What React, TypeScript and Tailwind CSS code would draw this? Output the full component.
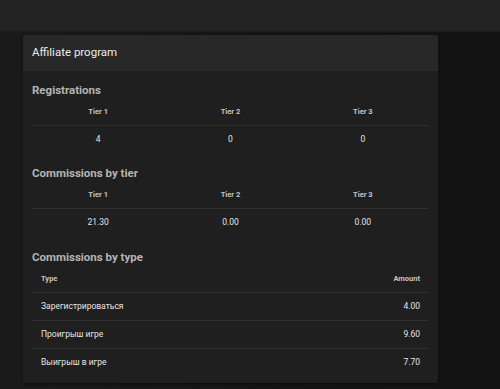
import React from "react";

const tiers = ["Tier 1", "Tier 2", "Tier 3"];

function TierTable({ values }: { values: string[] }) {
  return (
    <table className="w-full border-collapse table-fixed">
      <thead>
        <tr className="h-[27px]">
          {tiers.map((t) => (
            <th key={t} className="text-[7.5px] font-bold text-[#c4c4c4] text-center align-middle p-0">
              {t}
            </th>
          ))}
        </tr>
      </thead>
      <tbody>
        <tr className="h-[28px] border-t border-[#2f2f2f]">
          {values.map((v, i) => (
            <td key={i} className="text-[8.5px] text-[#e4e4e4] text-center align-middle p-0">
              {v}
            </td>
          ))}
        </tr>
      </tbody>
    </table>
  );
}

const types = [
  ["Зарегистрироваться", "4.00"],
  ["Проигрыш игре", "9.60"],
  ["Выигрыш в игре", "7.70"],
];

export default function App() {
  return (
    <div
      className="w-[500px] h-[389px] overflow-hidden bg-[#151515] flex flex-col"
      style={{ fontFamily: "Roboto, 'Noto Sans', sans-serif" }}
    >
      <div className="h-[32px] shrink-0 bg-[#232323] border-b border-[#1b1b1b]" />
      <div className="flex-1 bg-gradient-to-r from-[#1a1a1a] via-[#151515] to-[#131313] pl-[23px] pt-[3px]">
        <div className="w-[415px] bg-[#1f1f1f] rounded-[2px] shadow-[0_1px_3px_rgba(0,0,0,0.5)]">
          <div className="h-[37px] bg-[#282828] px-[9px] flex items-center text-[11.5px] text-[#ececec] rounded-t-[2px] border-b border-[#1c1c1c]">
            Affiliate program
          </div>
          <div className="px-[9px] pt-[10px] pb-[7px]">
            <div className="h-4 leading-4 text-[11.5px] font-bold text-[#b4b4b4]">Registrations</div>
            <TierTable values={["4", "0", "0"]} />
            <div className="mt-[12px] h-4 leading-4 text-[11.5px] font-bold text-[#b4b4b4]">Commissions by tier</div>
            <TierTable values={["21.30", "0.00", "0.00"]} />
            <div className="mt-[13px] h-4 leading-4 text-[11.5px] font-bold text-[#b4b4b4]">Commissions by type</div>
            <table className="w-full border-collapse">
              <thead>
                <tr className="h-[27px]">
                  <th className="text-[7.5px] font-bold text-[#c4c4c4] text-left align-middle py-0 px-[9px]">Type</th>
                  <th className="text-[7.5px] font-bold text-[#c4c4c4] text-right align-middle py-0 px-[9px]">Amount</th>
                </tr>
              </thead>
              <tbody>
                {types.map(([t, a], i) => (
                  <tr key={i} className="h-[28px] border-t border-[#2f2f2f]">
                    <td className="text-[8.5px] text-[#e4e4e4] text-left align-middle py-0 px-[9px]">{t}</td>
                    <td className="text-[8.5px] text-[#e4e4e4] text-right align-middle py-0 px-[9px]">{a}</td>
                  </tr>
                ))}
              </tbody>
            </table>
          </div>
        </div>
      </div>
    </div>
  );
}
